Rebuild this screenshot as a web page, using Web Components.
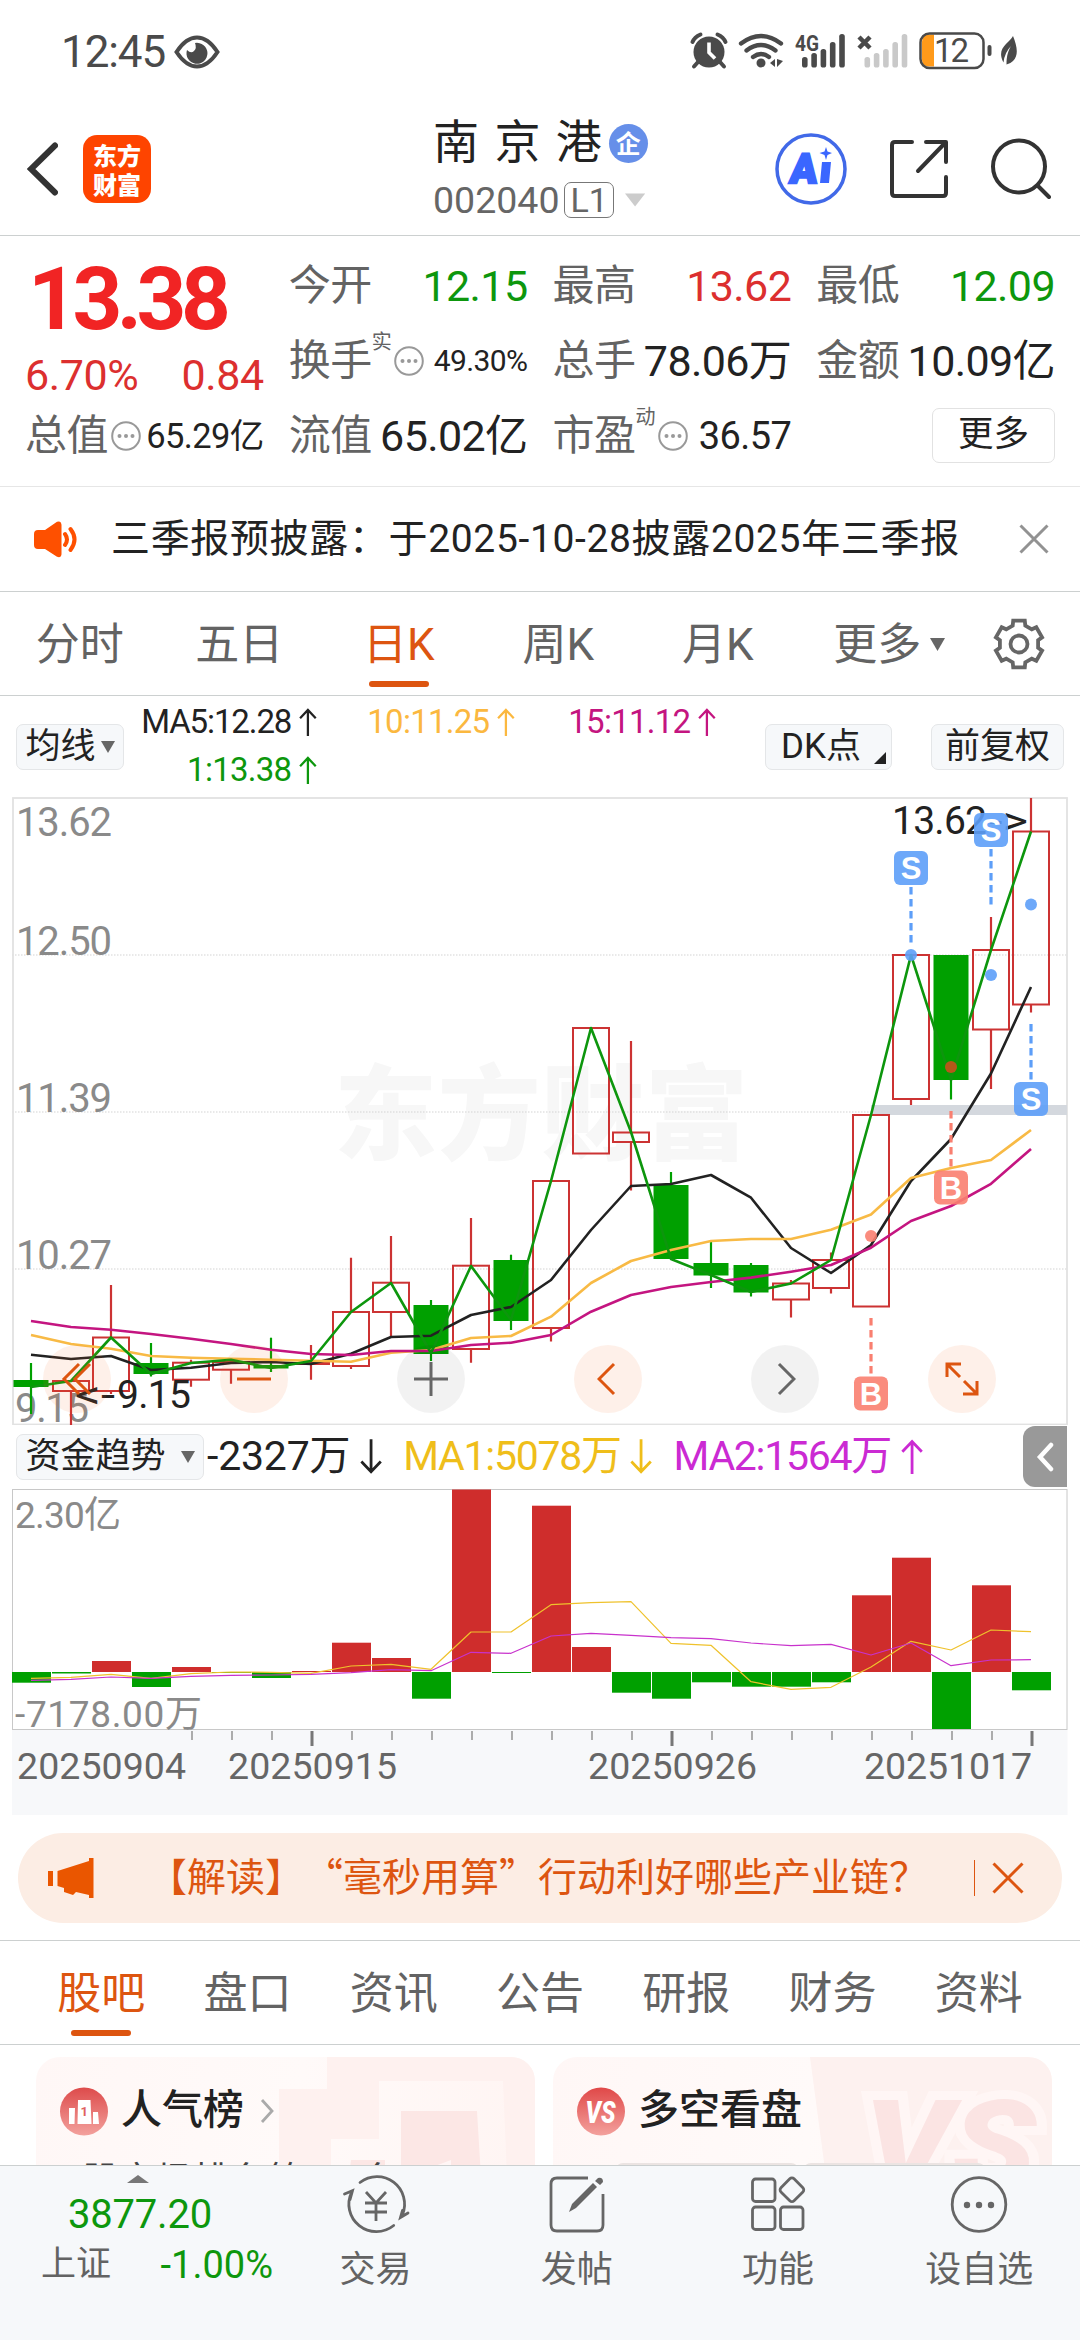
<!DOCTYPE html>
<html lang="zh-CN">
<head>
<meta charset="utf-8">
<title>南京港 002040</title>
<style>
  body {
    margin: 0;
    background: #fff;
    font-family: Roboto, "Noto Sans CJK SC", sans-serif;
    line-height: 1.2;
    color: #222;
    --orange: #dd5510;
    --green: #0d970d;
    --red: #dc2f2f;
    --gray: #636363;
    --line: #ccd0d0;
  }
</style>
</head>
<body>
<stock-page></stock-page>

<script>
const html = (content) => {
  const template = document.createElement('template')
  template.innerHTML = content
  return template
}

class ViewElement extends HTMLElement {
  constructor() {
    super()
    this._shadowRoot = this.attachShadow({ mode: 'open' })
    this._shadowRoot.appendChild(this.constructor.template.content.cloneNode(true))
  }
}

/* ---------- status bar ---------- */

const bars = (x, color) => [57, 53, 49, 42, 34]
  .map((top, i) => `<rect x="${x + i * 9.3}" y="${top}" width="5.6" height="${67.5 - top}" rx="2.6" fill="${color}"/>`)
  .join('')

class StatusBar extends ViewElement {
  static template = html(`<style>
    :host {
      display: flex;
      align-items: center;
      justify-content: space-between;
      height: 103px;
      padding: 0 61px 0 61px;
      box-sizing: border-box;
      color: #4a4a4a;
    }
    .left { display: flex; align-items: center; gap: 9px; }
    .time { font-size: 44px; line-height: 50px; letter-spacing: -1.1px; }
    svg { display: block; }
  </style>
  <div class="left">
    <span class="time">12:45</span>
    <svg width="46" height="34" viewBox="0 0 46 34">
      <path d="M2.5 17Q12 2.500 23 2.500T43.500 17Q34 31.500 23 31.500T2.500 17Z" fill="none" stroke="#4a4a4a" stroke-width="4"/>
      <path d="M21 8a10.500 10.500 0 1 1-8 7q4 4 7 1t1-8Z" fill="#4a4a4a"/>
    </svg>
  </div>
  <svg width="330" height="103" viewBox="689 0 330 103" fill="#4a4a4a">
    <circle cx="709" cy="52" r="15.500"/>
    <path d="M692.500 42q2-5 8-7.500M725.500 42q-2-5-8-7.500M698 62l-4 4.500M720 62l4 4.500" fill="none" stroke="#4a4a4a" stroke-width="4" stroke-linecap="round"/>
    <path d="M709 42.500v10l6 6" fill="none" stroke="#fff" stroke-width="3.600"/>
    <g fill="none" stroke="#4a4a4a" stroke-width="4.300" stroke-linecap="round">
      <path d="M741 43.500q20-15 40 0M746.500 50.500q14.500-11 29 0M753 57q8-6 16 0"/>
    </g>
    <circle cx="761" cy="63" r="4.500"/>
    <path d="M770 63l5-4v8zM777 59l6 2-6 6z"/>
    <text x="795" y="50.500" font-size="22" font-weight="700" textLength="24" lengthAdjust="spacingAndGlyphs">4G</text>
    ${bars(802, '#4a4a4a')}
    <path d="M859 37l11 11M870 37l-11 11" stroke="#4a4a4a" stroke-width="4.500"/>
    ${bars(864.5, '#c9c9c9')}
    <path d="M934 34.500h-5q-7 0-7 7v18q0 7 7 7h5z" fill="#ff9a1a"/>
    <rect x="920.500" y="33.500" width="63" height="34.500" rx="9" fill="none" stroke="#4a4a4a" stroke-width="2.500"/>
    <rect x="987.500" y="45" width="4" height="11" rx="2"/>
    <text x="934" y="62" font-size="33" textLength="35">12</text>
    <path d="M1013 36c4 10 6 19 0 25q-3 3-6.500 3.500c0-9 2-15 5-19q-7 7-8 17c-8-15 6-19 9.500-26.500Z"/>
  </svg>`)
}

/* ---------- title bar ---------- */

class StockHeader extends ViewElement {
  static template = html(`<style>
    :host {
      display: grid;
      grid-template-columns: 1fr auto 1fr;
      height: 133px;
      padding: 0 29px 0 27px;
      box-sizing: border-box;
      border-bottom: 1px solid var(--line);
    }
    svg { display: block; }
    .left { display: flex; align-items: center; gap: 25px; }
    .logo {
      display: flex;
      flex-direction: column;
      align-items: center;
      justify-content: center;
      width: 68px;
      height: 68px;
      border-radius: 14px;
      background: #fe4400;
      color: #fff;
      font: 900 24px/29px "Noto Sans CJK SC", sans-serif;
    }
    .title { display: flex; flex-direction: column; width: 212px; padding-top: 10px; }
    .name { display: flex; align-items: center; height: 60px; gap: 7px; font-size: 46px; }
    .name b { font-weight: 400; word-spacing: 4px; white-space: nowrap; }
    .qi {
      flex: none;
      width: 39px;
      height: 39px;
      border-radius: 50%;
      background: #668fe9;
      color: #fff;
      text-align: center;
      font: 700 25px/37px "Noto Sans CJK SC", sans-serif;
    }
    .code { display: flex; align-items: center; height: 46px; padding-top: 4px; font-size: 37.500px; color: #666; }
    .code i {
      font-style: normal;
      font-size: 34px;
      line-height: 34px;
      margin: 0 11px 0 5px;
      padding: 0 5px;
      border: 1.500px solid #777;
      border-radius: 7px;
    }
    .right { display: flex; align-items: center; justify-content: flex-end; gap: 42px; }
  </style>
  <div class="left">
    <svg width="31" height="54" viewBox="0 0 31 54"><path d="M28 3.500L4 27l24 23.500" fill="none" stroke="#333" stroke-width="6" stroke-linecap="round"/></svg>
    <div class="logo"><span>东方</span><span>财富</span></div>
  </div>
  <div class="title">
    <div class="name"><b>南 京 港</b><span class="qi">企</span></div>
    <div class="code">002040<i>L1</i><svg width="22" height="14" viewBox="0 0 22 14"><path d="M0 0h22L11 14z" fill="#ccc"/></svg></div>
  </div>
  <div class="right">
    <svg width="72" height="74" viewBox="0 0 72 74" fill="#3a66ff">
      <circle cx="36" cy="37" r="34" fill="none" stroke="#4169e8" stroke-width="3.500"/>
      <text transform="translate(14 51) skewX(-6)" font-size="41" font-weight="900" textLength="27" lengthAdjust="spacingAndGlyphs" stroke="#3a66ff" stroke-width="2.500">A</text>
      <path d="M47 30h9l-2 21h-9zM51 15l1.500 4.500 4.500 1.500-4.500 2-1.500 5-1.500-5-5-2 5-1.500z"/>
    </svg>
    <svg width="60" height="60" viewBox="0 0 60 60" fill="none" stroke="#333" stroke-width="4" stroke-linecap="round" stroke-linejoin="round">
      <path d="M23 3H6q-3 0-3 3v48q0 3 3 3h48q3 0 3-3V38M37 3h20v20M56 4L29 32"/>
    </svg>
    <svg width="60" height="62" viewBox="0 0 60 62" fill="none" stroke="#333" stroke-width="4" stroke-linecap="round">
      <circle cx="28" cy="28.500" r="26"/><path d="M47 48l11 11"/>
    </svg>
  </div>`)
}

/* ---------- quote panel ---------- */

class QuoteCell extends ViewElement {
  static template = html(`<style>
    :host { display: flex; align-items: center; justify-content: space-between; white-space: nowrap; }
    .label { display: flex; align-items: center; font-size: 42px; line-height: 50px; color: var(--gray); letter-spacing: -.5px; }
    sup { align-self: flex-start; font-size: 20px; line-height: 20px; margin-top: -4px; }
    .dots { display: none; margin-left: 3px; }
    :host([info]) .dots { display: block; }
    .value { font-size: var(--size, 43px); line-height: 50px; color: var(--value, #222); letter-spacing: -.6px; }
  </style>
  <span class="label"><span id="name"></span><sup></sup>
    <svg class="dots" width="30" height="30" viewBox="0 0 30 30" fill="#999">
      <circle cx="15" cy="15" r="13.800" fill="none" stroke="#999" stroke-width="2"/>
      <circle cx="8.500" cy="15" r="2"/><circle cx="15" cy="15" r="2"/><circle cx="21.500" cy="15" r="2"/>
    </svg>
  </span>
  <span class="value"><slot></slot></span>`)

  connectedCallback() {
    this._shadowRoot.querySelector('#name').textContent = this.getAttribute('label')
    this._shadowRoot.querySelector('sup').textContent = this.getAttribute('mark') || ''
  }
}

class QuotePanel extends ViewElement {
  static template = html(`<style>
    :host {
      display: grid;
      grid-template-columns: repeat(4, 1fr);
      grid-template-rows: repeat(3, 75px);
      column-gap: 25px;
      padding: 12px 25px 13px;
      border-bottom: 1px solid #e6e6e6;
    }
    .price { grid-row: span 2; display: flex; flex-direction: column; }
    .last { font-size: 87px; font-weight: 700; line-height: 102px; letter-spacing: -5.500px; color: #f12424; padding-left: 3px; }
    .change { display: flex; justify-content: space-between; font-size: 43px; line-height: 50px; color: var(--red); letter-spacing: -.4px; }
    .up { --value: var(--red); }
    .down { --value: var(--green); }
    .more {
      justify-self: end;
      align-self: center;
      width: 121px;
      height: 53px;
      border: 1.500px solid #e2e2e2;
      border-radius: 7px;
      font-size: 35.500px;
      line-height: 50px;
      text-align: center;
    }
  </style>
  <div class="price">
    <span class="last">13.38</span>
    <div class="change"><span>6.70%</span><span>0.84</span></div>
  </div>
  <quote-cell label="今开" class="down">12.15</quote-cell>
  <quote-cell label="最高" class="up">13.62</quote-cell>
  <quote-cell label="最低" class="down">12.09</quote-cell>
  <quote-cell label="换手" mark="实" info style="--size: 30px">49.30%</quote-cell>
  <quote-cell label="总手">78.06万</quote-cell>
  <quote-cell label="金额">10.09亿</quote-cell>
  <quote-cell label="总值" info style="--size: 34.500px">65.29亿</quote-cell>
  <quote-cell label="流值">65.02亿</quote-cell>
  <quote-cell label="市盈" mark="动" info style="--size: 38px">36.57</quote-cell>
  <span class="more">更多</span>`)
}

class NoticeBar extends ViewElement {
  static template = html(`<style>
    :host {
      display: flex;
      align-items: center;
      height: 105px;
      padding: 0 31px 0 34px;
      box-sizing: border-box;
      border-bottom: 1px solid var(--line);
    }
    p { flex: 1; margin: 0 0 0 33px; font-size: 39px; letter-spacing: .65px; white-space: nowrap; }
    svg { display: block; }
  </style>
  <svg width="44" height="37" viewBox="0 0 44 37" fill="#fe5000">
    <path d="M4 9h7L23 .800q4-1.500 4.500 3v29.500q-.500 4-4.500 2.500L11 28H4q-4 0-4-4V13q0-4 4-4Z"/>
    <path d="M31 13q4 5.500 0 11M36.500 8q8 10.500 0 21" fill="none" stroke="#fe5000" stroke-width="4" stroke-linecap="round"/>
  </svg>
  <p><slot></slot></p>
  <svg width="30" height="30" viewBox="0 0 30 30"><path d="M1.500 1.500l27 27M28.500 1.500l-27 27" stroke="#929292" stroke-width="3"/></svg>`)
}

/* ---------- tabs ---------- */

class TabItem extends ViewElement {
  static template = html(`<style>
    :host {
      position: relative;
      flex: 1;
      display: flex;
      align-items: center;
      justify-content: center;
      padding-top: 3px;
      font-size: 44px;
      color: var(--gray);
    }
    :host([active]) { color: var(--orange); }
    :host([active])::after {
      content: "";
      position: absolute;
      bottom: 8px;
      width: 60px;
      height: 6.500px;
      border-radius: 3px;
      background: var(--orange);
    }
    svg { position: absolute; left: 132px; top: 46px; display: none; }
    :host([menu]) svg { display: block; }
  </style>
  <slot></slot><svg width="15" height="13" viewBox="0 0 15 13"><path d="M0 0h15L7.500 13z" fill="#666"/></svg>`)
}

const gearPoints = () => {
  const points = []
  for (let k = 0; k < 6; ++k) {
    for (const [shift, r] of [[-19, 19.5], [-14, 24], [14, 24], [19, 19.5]]) {
      const a = (k * 60 - 90 + shift) * Math.PI / 180
      points.push(`${(26 + r * Math.cos(a)).toFixed(1)},${(26 + r * Math.sin(a)).toFixed(1)}`)
    }
  }
  return points.join(' ')
}

class PeriodTabs extends ViewElement {
  static template = html(`<style>
    :host { display: flex; height: 104px; box-sizing: border-box; border-bottom: 1px solid var(--line); }
    .gear { flex: 0 0 123px; display: flex; align-items: center; justify-content: center; }
  </style>
  <tab-item>分时</tab-item>
  <tab-item>五日</tab-item>
  <tab-item active>日K</tab-item>
  <tab-item>周K</tab-item>
  <tab-item>月K</tab-item>
  <tab-item menu>更多</tab-item>
  <div class="gear">
    <svg width="52" height="52" viewBox="0 0 52 52" fill="none" stroke="#666" stroke-width="3.800">
      <polygon points="${gearPoints()}"/><circle cx="26" cy="26" r="8.500"/>
    </svg>
  </div>`)
}

class InfoTabs extends ViewElement {
  static template = html(`<style>
    :host {
      display: flex;
      height: 105px;
      padding: 0 28px;
      box-sizing: border-box;
      border-top: 1px solid var(--line);
      border-bottom: 1px solid var(--line);
    }
  </style>
  <tab-item active>股吧</tab-item>
  <tab-item>盘口</tab-item>
  <tab-item>资讯</tab-item>
  <tab-item>公告</tab-item>
  <tab-item>研报</tab-item>
  <tab-item>财务</tab-item>
  <tab-item>资料</tab-item>`)
}

/* ---------- indicator bars ---------- */

class ChipButton extends ViewElement {
  static template = html(`<style>
    :host {
      position: relative;
      flex: none;
      display: flex;
      align-items: center;
      justify-content: center;
      gap: 5px;
      height: 46px;
      box-sizing: border-box;
      border: 1.500px solid #e4e6e8;
      border-radius: 7px;
      background: #f6f8fa;
      font-size: 35px;
      line-height: 40px;
      white-space: nowrap;
    }
    svg { display: none; }
    :host([menu]) .menu { display: block; }
    :host([corner]) .corner { display: block; position: absolute; right: 5px; bottom: 5px; }
  </style>
  <slot></slot>
  <svg class="menu" width="14" height="12" viewBox="0 0 14 12"><path d="M0 0h14L7 12z" fill="#666"/></svg>
  <svg class="corner" width="12" height="12" viewBox="0 0 12 12"><path d="M12 0v12H0z" fill="#222"/></svg>`)
}

class TrendValue extends ViewElement {
  static template = html(`<style>
    :host { display: flex; align-items: center; justify-content: flex-end; gap: .24em; white-space: nowrap; }
    svg { flex: none; width: .54em; height: .86em; }
    :host([down]) svg { transform: rotate(180deg); }
  </style>
  <slot></slot>
  <svg viewBox="0 0 18 29"><path d="M9 29V2M1 10.500L9 2l8 8.500" fill="none" stroke="currentColor" stroke-width="2.300"/></svg>`)
}

class MaBar extends ViewElement {
  static template = html(`<style>
    :host { display: flex; height: 101px; padding: 0 16px; box-sizing: border-box; }
    chip-button { margin-top: 28px; }
    .values {
      display: grid;
      grid-template-columns: 178px 198px 201px;
      grid-template-rows: 48px 48px;
      margin: 2px 49px 0 15px;
      font-size: 33px;
      letter-spacing: -.75px;
    }
  </style>
  <chip-button menu style="width: 108px">均线</chip-button>
  <div class="values">
    <trend-value style="color: #222; letter-spacing: -1.100px">MA5:12.28</trend-value>
    <trend-value style="color: #fbb83f">10:11.25</trend-value>
    <trend-value style="color: #c41580">15:11.12</trend-value>
    <trend-value style="color: var(--green)">1:13.38</trend-value>
  </div>
  <chip-button corner style="width: 127px; margin-right: auto; padding-right: 15px">DK点</chip-button>
  <chip-button style="width: 133px">前复权</chip-button>`)
}

class FundBar extends ViewElement {
  static template = html(`<style>
    :host { display: flex; align-items: center; height: 63px; padding: 0 13px 0 16px; font-size: 41px; }
    trend-value { margin-right: 21px; letter-spacing: var(--track, -1.300px); }
    .fold {
      display: flex;
      align-items: center;
      justify-content: center;
      width: 44px;
      height: 61px;
      margin-left: auto;
      border-radius: 12px 0 0 12px;
      background: #999;
    }
  </style>
  <chip-button menu style="width: 188px; gap: 15px; margin-right: 3px">资金趋势</chip-button>
  <trend-value down style="color: #222; --track: -.2px">-2327万</trend-value>
  <trend-value down style="color: #efbe1a">MA1:5078万</trend-value>
  <trend-value style="color: #cb2ad3">MA2:1564万</trend-value>
  <div class="fold"><svg width="18" height="30" viewBox="0 0 18 30"><path d="M15 3L4 15l11 12" fill="none" stroke="#fff" stroke-width="4.500" stroke-linecap="round"/></svg></div>`)
}

/* ---------- charts ---------- */

const centerX = (i) => 31 + i * 40
const polyline = (ys, color, width) =>
  `<polyline points="${ys.map((y, i) => centerX(i) + ',' + y).join(' ')}" fill="none" stroke="${color}" stroke-width="${width}" stroke-linejoin="round"/>`
const label = (x, y, text, size, width, fill = '#8a8a8a') =>
  `<text x="${x}" y="${y}" font-size="${size}" textLength="${width}" fill="${fill}">${text}</text>`

// direction, high, body top, body bottom, low
const candles = [
  ['d', 1362, 1379, 1386, 1413], ['u', 1380, 1380, 1390, 1424], ['u', 1284, 1336.5, 1390, 1393],
  ['d', 1342, 1362, 1373, 1375.5], ['u', 1358.7, 1361.7, 1378.7, 1385.7], ['u', 1359, 1361, 1368.7, 1382.7],
  ['d', 1336.7, 1364, 1367.5, 1371], ['u', 1344, 1362, 1363, 1378.7], ['u', 1256.7, 1311, 1365, 1368],
  ['u', 1235, 1281.7, 1311, 1336.7], ['d', 1299, 1304, 1353, 1360], ['u', 1217, 1264.7, 1348, 1361.7],
  ['d', 1253.7, 1259, 1320, 1329], ['u', 1180, 1180, 1327, 1340.5], ['u', 1027, 1027, 1152.5, 1152.5],
  ['u', 1040, 1131.5, 1141, 1189.5], ['d', 1171, 1184, 1258, 1258], ['d', 1241, 1262, 1274.5, 1287],
  ['d', 1262, 1264, 1291.5, 1295.5], ['u', 1279, 1282.5, 1298.5, 1316.5], ['u', 1251.5, 1259, 1287, 1292.5],
  ['u', 1114, 1114, 1305.5, 1305.5], ['u', 954, 954, 1098, 1104], ['d', 954, 954, 1079, 1098.5],
  ['u', 916, 949, 1028.5, 1088], ['u', 797, 830.5, 1003.5, 1011.5],
]
const close = [1386, 1380, 1336.5, 1373, 1362, 1358.7, 1367, 1360, 1311, 1282, 1352, 1265, 1319,
  1180, 1027, 1131, 1258, 1274, 1291, 1282.5, 1259, 1114, 954, 1079, 949, 830.5]
const ma5 = [1353.7, 1358, 1355, 1369, 1366.7, 1362, 1361, 1363, 1352.7, 1336, 1334.7, 1314, 1306,
  1279, 1229, 1185, 1183, 1174, 1196.7, 1247, 1272, 1244, 1180, 1138, 1072.5, 986]
const ma10 = [1334, 1343, 1347.7, 1355, 1356.7, 1357.7, 1358.7, 1359.7, 1360.7, 1351.7, 1349, 1337, 1335,
  1315.7, 1282, 1260, 1249, 1240, 1238, 1238, 1228.7, 1213.5, 1177, 1167, 1159, 1129]
const ma15 = [1320, 1326, 1328.7, 1333, 1337.7, 1343, 1348.7, 1353, 1354, 1350, 1350, 1344, 1341.7,
  1334, 1310.7, 1294, 1286, 1281, 1276.6, 1270.7, 1264, 1246.7, 1220, 1205, 1182.8, 1148]

const candle = ([dir, high, top, bottom, low], i) => {
  const x = centerX(i)
  if (dir === 'd') {
    return `<path d="M${x} ${high}V${low}" stroke="#00a000" stroke-width="2.200"/>
      <rect x="${x - 17.5}" y="${top}" width="35" height="${bottom - top}" fill="#00a000"/>`
  }
  return `<path d="M${x} ${high}V${top}M${x} ${bottom}V${low}" stroke="#c33" stroke-width="2.200"/>
    <rect x="${x - 18}" y="${top}" width="36" height="${bottom - top}" fill="none" stroke="#c33" stroke-width="2"/>`
}

// trade marker: square with a letter, dashed leader and a dot at the deal price
const marker = (i, type, top, from, to, dot, dotColor) => {
  const color = type === 'S' ? '#5d9ef8' : '#f97f70'
  const x = centerX(i)
  return `<path d="M${x} ${from}V${to}" stroke="${color}" stroke-width="3.200" stroke-dasharray="7.500 4.500"/>
    <circle cx="${x}" cy="${dot}" r="6" fill="${dotColor || color}" opacity=".9"/>
    <rect x="${x - 17}" y="${top}" width="34" height="34" rx="6" fill="${color}" opacity=".9"/>
    <text x="${x}" y="${top + 28}" font-size="31" font-weight="700" text-anchor="middle" fill="#fff" font-family="Liberation Sans">${type}</text>`
}

class KChart extends ViewElement {
  static template = html(`<style>
    :host { position: relative; display: block; margin: 0 12px; height: 628px; }
    svg { display: block; }
    .tools {
      position: absolute;
      left: 31px;
      top: 548px;
      width: 953px;
      display: flex;
      justify-content: space-between;
    }
    .tools span {
      display: flex;
      align-items: center;
      justify-content: center;
      width: 68px;
      height: 68px;
      border-radius: 50%;
      background: rgba(250, 110, 40, .1);
      color: var(--orange);
    }
    .tools .gray { background: rgba(0, 0, 0, .05); color: #666; }
    .tools svg { fill: none; stroke: currentColor; stroke-width: 3; }
  </style>
  <svg width="1056" height="628" viewBox="12 796 1056 628">
    <text x="334" y="1151" font-size="103" font-weight="900" textLength="414" fill="#f7f7f7" font-family="Noto Sans CJK SC">东方财富</text>
    <path d="M12 954H1067M12 1111H1067M12 1268H1067" stroke="#d4d4d4" stroke-width="1.200" stroke-dasharray="1.500 1.500"/>
    <rect x="13" y="797" width="1054" height="626.500" fill="none" stroke="#e2e2e2" stroke-width="1.800"/>
    <rect x="871" y="1104" width="196" height="10" fill="#d4d8de"/>
    ${label(16, 835, '13.62', 40, 96)}
    ${label(16, 954, '12.50', 40, 96)}
    ${label(16, 1111, '11.39', 40, 96)}
    ${label(16, 1268, '10.27', 40, 96)}
    ${label(15, 1421, '9.15', 40, 74)}
    ${label(892, 832.5, '13.62', 39, 95, '#222')}
    <text x="989" y="832.500" font-size="39" textLength="39" lengthAdjust="spacingAndGlyphs" fill="#222">-&gt;</text>
    ${candles.map(candle).join('')}
    ${polyline(ma5, '#222', 2.6)}
    ${polyline(ma10, '#f8ba45', 2.6)}
    ${polyline(ma15, '#c41580', 2.6)}
    ${polyline(close, '#0d960d', 2.6)}
    <text x="75" y="1407" font-size="39" textLength="40" lengthAdjust="spacingAndGlyphs" fill="#222">&lt;-</text>
    ${label(117, 1407, '9.15', 39, 74, '#222')}
    ${marker(21, 'B', 1375.5, 1317, 1373, 1235)}
    ${marker(22, 'S', 850, 886, 943, 954)}
    ${marker(23, 'B', 1169.5, 1110, 1168, 1066, '#c8501c')}
    ${marker(24, 'S', 812, 848, 905, 974)}
    ${marker(25, 'S', 1081, 1023, 1079, 903.5)}
  </svg>
  <div class="tools">
    <span><svg width="36" height="34" viewBox="0 0 36 34"><path d="M20 2L5 17l15 15M31 2L16 17l15 15"/></svg></span>
    <span><svg width="34" height="34" viewBox="0 0 34 34"><path d="M0 17h34"/></svg></span>
    <span class="gray"><svg width="34" height="34" viewBox="0 0 34 34"><path d="M0 17h34M17 0v34"/></svg></span>
    <span><svg width="22" height="34" viewBox="0 0 22 34"><path d="M17 2L2 17l15 15"/></svg></span>
    <span class="gray"><svg width="22" height="34" viewBox="0 0 22 34"><path d="M5 2l15 15L5 32"/></svg></span>
    <span><svg width="34" height="34" viewBox="0 0 34 34"><path d="M2 15V2h14M2 2l13 13M32 19v13H18M32 32L19 19"/></svg></span>
  </div>`)
}

const flows = [1681.7, 1672.5, 1660, 1686, 1666, 1672, 1677, 1670, 1641.7, 1657, 1697.7, 1488.5, 1672,
  1504.7, 1646, 1691.7, 1697.7, 1681.3, 1685.7, 1685.7, 1681.3, 1594.3, 1556.7, 1728, 1584.3, 1689.3]
const flowMa1 = [1677.3, 1676.3, 1673.3, 1677.3, 1672.7, 1671, 1671.3, 1672.3, 1665, 1663.3, 1668.3, 1631, 1631,
  1603.7, 1601.7, 1600.7, 1642.3, 1644.3, 1680.7, 1688.3, 1686.3, 1666, 1640.3, 1649, 1629, 1630.7]
const flowMa2 = [1679.3, 1678.3, 1676, 1677.3, 1675.3, 1674.3, 1674, 1673.3, 1671.7, 1668.7, 1669.7, 1651.3, 1652.3,
  1635, 1632.3, 1634.3, 1636.7, 1637.7, 1642, 1644.7, 1643.3, 1654, 1642, 1664.7, 1659, 1658.7]
const zeroY = 1671

const flowBar = (y, i) => `<rect x="${centerX(i) - 19}" y="${Math.min(y, zeroY)}" width="39"
  height="${Math.abs(y - zeroY)}" fill="${y > zeroY ? '#00a000' : '#cf2d2c'}"/>`

const ticks = () => {
  let result = ''
  for (let x = 192; x <= 1032; x += 40) {
    const major = (x - 312) % 360 === 0
    result += `<path d="M${x} 1730V${major ? 1745 : 1739}" stroke="${major ? '#777' : '#999'}" stroke-width="${major ? 3 : 1.6}"/>`
  }
  return result
}

class FundChart extends ViewElement {
  static template = html(`<style>
    :host { display: block; margin: 0 12px; height: 327px; }
    svg { display: block; }
  </style>
  <svg width="1056" height="327" viewBox="12 1487 1056 327">
    <rect x="12" y="1729" width="1055.500" height="85" fill="#f7f8fa"/>
    <rect x="12.500" y="1488.500" width="1054.500" height="240" fill="none" stroke="#c8c8c8"/>
    ${label(15, 1527, '2.30亿', 37, 106)}
    ${label(15, 1726, '-7178.00万', 37, 187)}
    ${flows.map(flowBar).join('')}
    ${polyline(flowMa1, '#efc22c', 1.2)}
    ${polyline(flowMa2, '#c832cc', 1.2)}
    ${ticks()}
    ${label(17, 1778, '20250904', 37.5, 169, '#666')}
    ${label(228, 1778, '20250915', 37.5, 169, '#666')}
    ${label(588, 1778, '20250926', 37.5, 169, '#666')}
    ${label(864, 1778, '20251017', 37.5, 168, '#666')}
  </svg>`)
}

/* ---------- promo and cards ---------- */

class PromoBanner extends ViewElement {
  static template = html(`<style>
    :host {
      display: flex;
      align-items: center;
      height: 90px;
      margin: 18px 18px 17px;
      padding: 0 38px 0 30px;
      box-sizing: border-box;
      border-radius: 45px;
      background: #fcede4;
      color: var(--orange);
    }
    p {
      flex: 1;
      margin: 0 0 0 54px;
      padding-bottom: 9px;
      font: 39px/60px "Noto Sans CJK SC", sans-serif;
      text-spacing-trim: space-all;
      white-space: nowrap;
    }
    i { width: 1.500px; height: 36px; margin-right: 17px; background: var(--orange); }
    svg { display: block; }
  </style>
  <svg width="46" height="40" viewBox="0 0 46 40" fill="#ea5600">
    <path d="M0 13h5v15H0zM9.500 13L41 3V0h4.500v40H41v-3l-13-3-3 3-9-3v-4l-6.500-2z"/>
  </svg>
  <p><slot></slot></p>
  <i></i>
  <svg width="32" height="32" viewBox="0 0 32 32"><path d="M1.500 1.500l29 29M30.500 1.500l-29 29" stroke="#dd5510" stroke-width="3"/></svg>`)
}

class RankCard extends ViewElement {
  static template = html(`<style>
    :host {
      position: relative;
      flex: 1;
      height: 220px;
      overflow: hidden;
      border-radius: 24px 24px 0 0;
      background: linear-gradient(100deg, #fff7f6, #fffaf9 50%, #fff4f2);
    }
    .head { position: relative; display: flex; align-items: center; height: 108px; padding-left: 24px; font-size: 41px; font-weight: 500; }
    .head ::slotted([slot=icon]) { margin-right: 13px; }
    .back { position: absolute; right: 0; top: 0; }
    .body { position: relative; margin-top: -2px; }
    .arrow { display: none; margin-left: 16px; }
    :host([link]) .arrow { display: block; }
  </style>
  <div class="back"><slot name="back"></slot></div>
  <div class="head">
    <slot name="icon"></slot><slot></slot>
    <svg class="arrow" width="14" height="26" viewBox="0 0 14 26"><path d="M2 2l10 11L2 24" fill="none" stroke="#aaa" stroke-width="2.800"/></svg>
  </div>
  <div class="body"><slot name="body"></slot></div>`)
}

class CardRow extends ViewElement {
  static template = html(`<style>
    :host { display: flex; gap: 18px; height: 108px; padding: 12px 28px 0 36px; overflow: hidden; }
    svg { display: block; }
    p { margin: 0; padding-left: 22px; font-size: 37px; line-height: 38px; white-space: pre; color: #444; }
    .vote { display: flex; gap: 4px; padding: 0 66px 0 62px; }
    .vote i { flex: 1; height: 40px; border-top: 2px solid #ebe4e2; background: #f7f1ef; border-radius: 8px 8px 0 0; }
  </style>
  <rank-card link>
    <svg slot="back" width="260" height="120" viewBox="0 0 260 120">
      <path d="M52 0H238Q260 0 260 24V120H232L228 24H104V82H56V120H4V32H52z" fill="#fef1ef"/>
      <path d="M126 54h76l4 66h-80zM76 103h34v17H74z" fill="#fce7e5"/>
      <path d="M176 103v17h-16v-11z" fill="#fff6f5"/>
    </svg>
    <svg slot="icon" width="48" height="49" viewBox="0 0 48 49">
      <defs><linearGradient id="a" x2="0" y2="1"><stop stop-color="#dd4b4b"/><stop offset="1" stop-color="#f3a19d"/></linearGradient></defs>
      <circle cx="24" cy="24.500" r="24" fill="url(#a)"/>
      <path d="M9 21h6l-.500 16H9zM18 13h12.500l1 24h-14zM33 25h5l1 12h-6z" fill="#fff"/>
      <text x="20.500" y="29" font-size="13" font-weight="700" fill="#e06060">1</text>
    </svg>
    人气榜
    <p slot="body">A股市场排名第  1  名</p>
  </rank-card>
  <rank-card>
    <svg slot="back" width="244" height="120" viewBox="0 0 244 120">
      <path d="M2 0H220Q244 0 244 24V120H18z" fill="#fdf1ef"/>
      <text x="56" y="130" font-size="122" font-weight="900" font-style="italic" fill="#fbe4e3" stroke="#fff6f5" stroke-width="18" paint-order="stroke" textLength="172" lengthAdjust="spacingAndGlyphs">VS</text>
    </svg>
    <svg slot="icon" width="48" height="49" viewBox="0 0 48 49">
      <defs><linearGradient id="b" x2="0" y2="1"><stop stop-color="#e04848"/><stop offset="1" stop-color="#f3a19d"/></linearGradient></defs>
      <circle cx="24" cy="24.500" r="24" fill="url(#b)"/>
      <text x="8.500" y="36" font-size="32" font-weight="900" font-style="italic" fill="#fff" textLength="30" lengthAdjust="spacingAndGlyphs">VS</text>
    </svg>
    多空看盘
    <div slot="body" class="vote"><i></i><i></i></div>
  </rank-card>`)
}

/* ---------- bottom bar ---------- */

class NavItem extends ViewElement {
  static template = html(`<style>
    :host {
      flex: 1;
      display: flex;
      flex-direction: column;
      align-items: center;
      padding-top: 8px;
      font-size: 36px;
      line-height: 44px;
      color: var(--gray);
    }
    ::slotted(svg) { display: block; width: 68px; height: 62px; margin-bottom: 12px; }
  </style>
  <slot name="icon"></slot><slot></slot>`)
}

class BottomNav extends ViewElement {
  static template = html(`<style>
    :host {
      display: flex;
      height: 176px;
      box-sizing: border-box;
      border-top: 1px solid var(--line);
      background: #f6f8fa;
      position: relative;
    }
    .index { flex: 0 0 275px; color: var(--green); padding-top: 9px; box-sizing: border-box; }
    .tri { display: block; margin-left: 127px; }
    .point { padding: 7px 0 0 68px; font-size: 40px; line-height: 50px; letter-spacing: -.2px; }
    .row { display: flex; justify-content: space-between; padding: 0 2px 0 41px; font-size: 38px; line-height: 50px; }
    .row b { font-weight: 400; font-size: 35px; color: var(--gray); }
    nav-item svg { fill: none; stroke: #666; stroke-width: 2.800; }
  </style>
  <div class="index">
    <svg class="tri" width="22" height="8" viewBox="0 0 22 8"><path d="M0 8L11 0l11 8z" fill="#777"/></svg>
    <div class="point">3877.20</div>
    <div class="row"><b>上证</b><span>-1.00%</span></div>
  </div>
  <nav-item>
    <svg slot="icon" viewBox="0 0 68 62">
      <path d="M18 8.500A27.500 27.500 0 0 1 60.500 40.500M51.700 51.500A27.500 27.500 0 0 1 9.700 18M2.500 20l8-3.400-2.500 9M66 39l-7.500 4.500 2-7" stroke-linecap="round"/>
      <path d="M24 18l10 11 10-11M34 29v18M23 29h22M23 38h22"/>
    </svg>交易
  </nav-item>
  <nav-item>
    <svg slot="icon" viewBox="0 0 68 62">
      <path d="M45 4H14q-6 0-6 6v41q0 6 6 6h40q6 0 6-6V20"/>
      <path d="M26 38l3-8L50 9l4 4-21 21zM52 7l3-3q5-1 5 4l-3 3z" fill="#666" stroke="none"/>
    </svg>发帖
  </nav-item>
  <nav-item>
    <svg slot="icon" viewBox="0 0 68 62">
      <rect x="8.500" y="5" width="22.500" height="22.500" rx="3"/>
      <rect x="8.500" y="33" width="22.500" height="22.500" rx="3"/>
      <rect x="36.500" y="33" width="22.500" height="22.500" rx="3"/>
      <rect x="38.500" y="6.500" width="18.500" height="18.500" rx="3" transform="rotate(45 47.750 16)"/>
    </svg>功能
  </nav-item>
  <nav-item>
    <svg slot="icon" viewBox="0 0 68 62">
      <circle cx="34" cy="30.500" r="26.800"/>
      <g fill="#666" stroke="none"><circle cx="22" cy="31" r="3.200"/><circle cx="34" cy="31" r="3.200"/><circle cx="46" cy="31" r="3.200"/></g>
    </svg>设自选
  </nav-item>`)
}

class StockPage extends ViewElement {
  static template = html(`<style>
    :host { display: flex; flex-direction: column; width: 1080px; height: 2340px; overflow: hidden; }
    :host > * { flex-shrink: 0; }
  </style>
  <status-bar></status-bar>
  <stock-header></stock-header>
  <quote-panel></quote-panel>
  <notice-bar>三季报预披露：于2025-10-28披露2025年三季报</notice-bar>
  <period-tabs></period-tabs>
  <ma-bar></ma-bar>
  <k-chart></k-chart>
  <fund-bar></fund-bar>
  <fund-chart></fund-chart>
  <promo-banner>【解读】“毫秒用算”行动利好哪些产业链？</promo-banner>
  <info-tabs></info-tabs>
  <card-row></card-row>
  <bottom-nav></bottom-nav>`)
}

customElements.define('status-bar', StatusBar)
customElements.define('stock-header', StockHeader)
customElements.define('quote-cell', QuoteCell)
customElements.define('quote-panel', QuotePanel)
customElements.define('notice-bar', NoticeBar)
customElements.define('tab-item', TabItem)
customElements.define('period-tabs', PeriodTabs)
customElements.define('info-tabs', InfoTabs)
customElements.define('chip-button', ChipButton)
customElements.define('trend-value', TrendValue)
customElements.define('ma-bar', MaBar)
customElements.define('fund-bar', FundBar)
customElements.define('k-chart', KChart)
customElements.define('fund-chart', FundChart)
customElements.define('promo-banner', PromoBanner)
customElements.define('rank-card', RankCard)
customElements.define('card-row', CardRow)
customElements.define('nav-item', NavItem)
customElements.define('bottom-nav', BottomNav)
customElements.define('stock-page', StockPage)
</script>
</body>
</html>
